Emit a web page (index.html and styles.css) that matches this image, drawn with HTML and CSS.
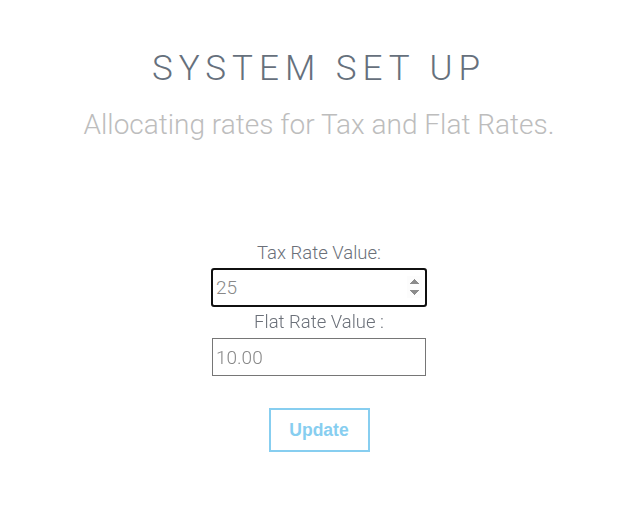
FILE: index.html
```html
<!DOCTYPE html>
<html>
<head>
<meta charset="utf-8">
<link rel="stylesheet" href="styles.css">
</head>
<body>
<div class="page">
  <h1 class="title">SYSTEM SET UP</h1>
  <p class="subtitle">Allocating rates for Tax and Flat Rates.</p>
  <form class="form">
    <label class="label" for="tax">Tax Rate Value:</label>
    <input class="field field-first" id="tax" type="number" value="25" autofocus>
    <label class="label" for="flat">Flat Rate Value :</label>
    <input class="field" id="flat" type="text" value="10.00">
    <button class="btn" type="button">Update</button>
  </form>
</div>
</body>
</html>
```
FILE: styles.css
```css
html, body { margin: 0; padding: 0; background: #fff; }
body { font-family: Roboto, "Liberation Sans", sans-serif; font-weight: 300; }
.page { display: flex; flex-direction: column; align-items: center; padding-top: 47px; padding-left: 21px; }
.title { margin: 0; font-size: 35px; font-weight: 300; letter-spacing: 6px; color: #66707c; line-height: 44px; }
.subtitle { margin: 17px 0 0; font-size: 28px; font-weight: 300; color: #bdbdbd; line-height: 34px; }
.form { display: flex; flex-direction: column; align-items: center; margin-top: 100px; }
.label { font-size: 18.5px; color: #6b7079; line-height: 22px; margin-bottom: 5px; }
.field { box-sizing: border-box; width: 214px; height: 38px; font-family: Roboto, sans-serif; font-weight: 300; font-size: 19px; color: #888; border: 1px solid #767676; padding: 0 3px; margin: 0 0 5px; border-radius: 0; }
.field-first { height: 37px; }
.field:focus { outline: 2px solid #101010; outline-offset: -1px; border-radius: 2px; }
.btn { margin-top: 27px; width: 101px; height: 44px; background: #fff; border: 2px solid #87cef0; color: #87cef0; font-family: "Liberation Sans", Arial, sans-serif; font-weight: 700; font-size: 17.5px; padding: 0; }
```
